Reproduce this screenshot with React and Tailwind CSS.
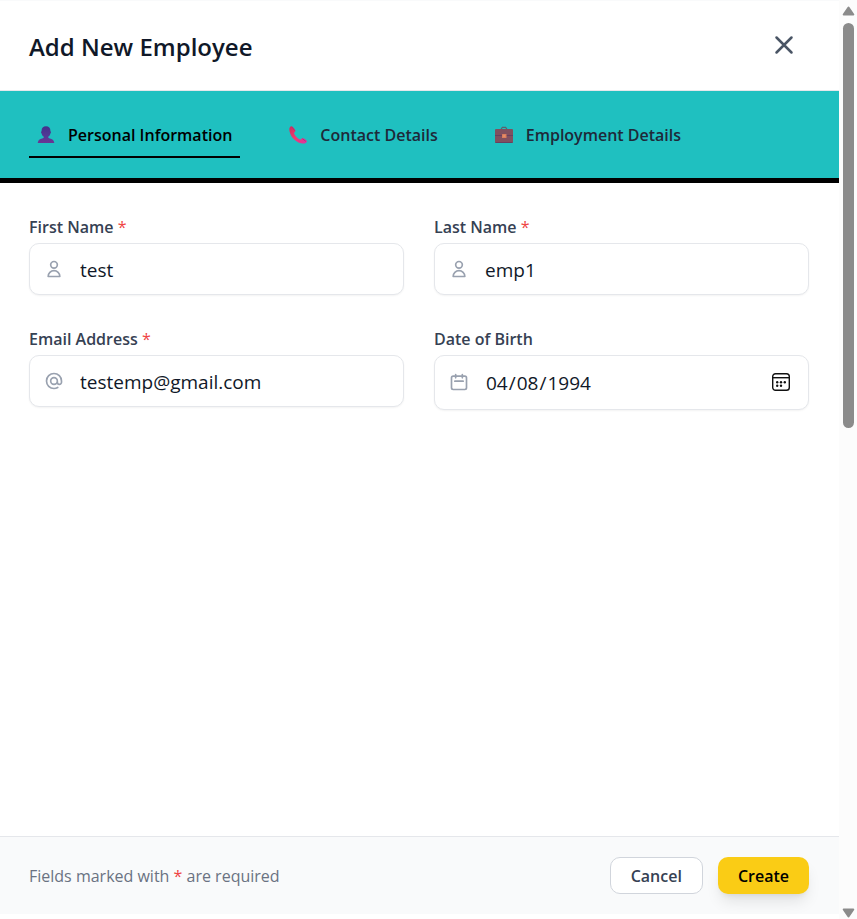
import React, { useState } from 'react';
import { HiOutlineAtSymbol, HiOutlineCalendar, HiOutlineUser, HiOutlineX } from 'react-icons/hi';

const PersonIcon = () => (
  <svg viewBox="0 0 18 18" className="w-[18px] h-[18px]" aria-hidden="true">
    <defs>
      <linearGradient id="person" x1="0" y1="0" x2="0" y2="1">
        <stop offset="0" stopColor="#43308c" />
        <stop offset="0.6" stopColor="#533a96" />
        <stop offset="1" stopColor="#6b3593" />
      </linearGradient>
    </defs>
    <path
      fill="url(#person)"
      d="M9 0.2C6.1 0.2 4.6 1.8 4.6 4.5v0.7c-0.7 0.1-0.8 1.9 0 2.2 0.3 1.6 1.1 2.5 2.1 3.2v1.2c-0.6 0.9-4 1-5.1 2.6-0.5 0.7-0.8 1.6-0.9 2.6h16.6c-0.1-1-0.4-1.900-0.900-2.600-1.100-1.600-4.500-1.700-5.100-2.600v-1.200c1-0.700 1.800-1.600 2.100-3.200 0.800-0.300 0.700-2.100 0-2.200V4.500C13.400 1.800 11.900 0.200 9 0.200z"
    />
  </svg>
);

const PhoneIcon = () => (
  <svg viewBox="0 0 18 18" className="w-[18px] h-[18px]" aria-hidden="true">
    <defs>
      <linearGradient id="phone" x1="0" y1="0" x2="1" y2="1">
        <stop offset="0" stopColor="#c9305e" />
        <stop offset="0.5" stopColor="#f2386f" />
        <stop offset="1" stopColor="#d936a6" />
      </linearGradient>
    </defs>
    <path
      fill="url(#phone)"
      d="M1.6 0.6C0.3 1.4 0.1 3.3 0.5 5.2c1.2 5.6 5.6 10.6 11.6 12.1 1.9 0.5 3.8 0.5 4.9-0.6 0.4-0.4 0.9-1 1-1.5 0.1-0.6-3.4-3.1-4.2-3.2-0.8-0.1-1.6 1.6-2.5 1.5C9.3 13.2 5.3 9 5.1 7.2c-0.1-0.9 1.3-1.5 1.4-2.3C6.6 4.1 3.7 0.3 2.9 0.2 2.4 0.2 2 0.4 1.6 0.6z"
    />
    <path stroke="#a83278" strokeWidth="0.8" d="M3.2 1.1l2.6 3.7M13.4 12.8l3.5 2.5" />
  </svg>
);

const BriefcaseIcon = () => (
  <svg viewBox="0 0 18 18" className="w-[18px] h-[18px]" aria-hidden="true">
    <path fill="none" stroke="#5b626d" strokeWidth="1.2" d="M6.4 3.3V2.600l1-1.200h3.200l1 1.200v0.700" />
    <rect x="0" y="3" width="18" height="14" rx="1" fill="#80505f" />
    <path stroke="#68405f" strokeWidth="1" d="M0 9.5h18M0.5 16.5h17" />
    <rect x="7" y="8" width="4.500" height="4" rx="0.600" fill="#db7e5d" />
    <rect x="8.300" y="9.300" width="1.900" height="1.400" fill="#e69870" />
  </svg>
);

const DateIcon = () => (
  <svg viewBox="0 0 20 20" className="w-5 h-5" fill="none" aria-hidden="true">
    <rect x="1.7" y="1.7" width="16.6" height="16.6" rx="2.8" stroke="#111" strokeWidth="1.4" />
    <path stroke="#111" strokeWidth="1.4" d="M1.7 5.7h16.6" />
    <g fill="#111">
      <circle cx="6.2" cy="10.2" r="1.2" />
      <circle cx="10" cy="10.2" r="1.2" />
      <circle cx="13.8" cy="10.2" r="1.2" />
      <circle cx="6.2" cy="13.8" r="1.2" />
      <circle cx="10" cy="13.8" r="1.2" />
    </g>
  </svg>
);

const tabs = [
  { id: 'personal', label: 'Personal Information', icon: PersonIcon },
  { id: 'contact', label: 'Contact Details', icon: PhoneIcon },
  { id: 'employment', label: 'Employment Details', icon: BriefcaseIcon },
];

const fields = [
  { id: 'firstName', label: 'First Name', type: 'text', required: true, icon: HiOutlineUser },
  { id: 'lastName', label: 'Last Name', type: 'text', required: true, icon: HiOutlineUser },
  { id: 'email', label: 'Email Address', type: 'email', required: true, icon: HiOutlineAtSymbol },
  { id: 'dob', label: 'Date of Birth', type: 'date', required: false, icon: HiOutlineCalendar },
];

const Field = ({ field, value, onChange }) => {
  const Icon = field.icon;
  const isDate = field.type === 'date';

  return (
    <div>
      <label htmlFor={field.id} className="block mb-1 text-base font-semibold text-gray-700">
        {field.label} {field.required && <span className="font-normal text-[#ef4444]">*</span>}
      </label>
      <div className="relative">
        <Icon
          className={`absolute left-[15px] w-5 h-5 text-gray-400 pointer-events-none ${
            isDate ? 'top-[17px]' : 'top-4'
          }`}
        />
        <input
          id={field.id}
          type={field.type}
          value={value}
          onChange={(e) => onChange(field.id, e.target.value)}
          className={`block w-full pt-0.5 pl-[50px] pr-4 text-[19px] text-gray-900 bg-white border border-gray-200 rounded-[10px] shadow-xs focus:outline-none focus:border-teal-500 ${
            isDate ? 'h-[55px] [&::-webkit-calendar-picker-indicator]:opacity-0' : 'h-[52px]'
          }`}
        />
        {isDate && (
          <span className="absolute right-[18px] top-[17px] pointer-events-none">
            <DateIcon />
          </span>
        )}
      </div>
    </div>
  );
};

const Scrollbar = () => (
  <div className="flex flex-col items-center w-[18px] shrink-0 pt-1.5 bg-[#fcfcfc]" aria-hidden="true">
    <svg viewBox="0 0 13 10" className="w-[13px] h-2.5">
      <path d="M6.5 1.5l4.8 7H1.7z" fill="#8b8b8b" stroke="#8b8b8b" strokeWidth="2" strokeLinejoin="round" />
    </svg>
    <div className="w-[11px] h-[405px] mt-[7px] rounded-full bg-[#8b8b8b]" />
    <svg viewBox="0 0 13 10" className="w-[13px] h-2.5 mt-auto mb-px">
      <path d="M6.5 8.5l4.8-7H1.7z" fill="#8b8b8b" stroke="#8b8b8b" strokeWidth="2" strokeLinejoin="round" />
    </svg>
  </div>
);

const AddEmployeeForm = () => {
  const [activeTab, setActiveTab] = useState('personal');
  const [formData, setFormData] = useState({
    firstName: 'test',
    lastName: 'emp1',
    email: 'testemp@gmail.com',
    dob: '1994-04-08',
  });

  const handleChange = (id, value) => {
    setFormData((prev) => ({ ...prev, [id]: value }));
  };

  return (
    <div className="flex min-h-screen bg-white font-['Open_Sans','Noto_Sans',sans-serif]">
      <div className="flex flex-col flex-1 min-w-0 pb-[5px]">
        {/* Header */}
        <header className="flex items-center justify-between h-[91px] pl-[29px] pr-10 border-t border-t-gray-50 border-b border-b-gray-200">
          <h2 className="pt-0.5 text-[24px] leading-8 font-semibold text-gray-900">Add New Employee</h2>
          <button type="button" aria-label="Close" className="pb-0.5 text-gray-600 hover:text-gray-800">
            <HiOutlineX className="w-[30px] h-[30px]" />
          </button>
        </header>

        {/* Tabs */}
        <nav className="flex items-start gap-[41px] h-[92px] pt-5 pl-[29px] bg-[#1fc0c0] border-b-[5px] border-black">
          {tabs.map(({ id, label, icon: Icon }) => (
            <button
              key={id}
              type="button"
              onClick={() => setActiveTab(id)}
              className={`flex items-center gap-[13px] h-[47px] pt-0.5 px-2 border-b-2 text-base font-semibold whitespace-nowrap ${
                activeTab === id ? 'border-black text-black' : 'border-transparent text-gray-800'
              }`}
            >
              <Icon />
              {label}
            </button>
          ))}
        </nav>

        {/* Form fields */}
        <form id="employee" onSubmit={(e) => e.preventDefault()} className="flex-1 pt-8 pl-[29px] pr-[30px]">
          <div className="grid grid-cols-2 items-start gap-x-[30px] gap-y-8">
            {fields.map((field) => (
              <Field key={field.id} field={field} value={formData[field.id]} onChange={handleChange} />
            ))}
          </div>
        </form>

        {/* Footer */}
        <footer className="flex items-center justify-between h-[78px] pl-[29px] pr-[30px] bg-gray-50 border-t border-gray-200">
          <p className="text-base text-gray-500">
            Fields marked with <span className="text-[#ef4444]">*</span> are required
          </p>
          <div className="flex gap-[15px]">
            <button
              type="button"
              className="h-[37px] px-5 text-base font-semibold text-gray-700 bg-white border border-gray-300 rounded-[10px] hover:bg-gray-50"
            >
              Cancel
            </button>
            <button
              type="submit"
              form="employee"
              className="h-[37px] px-5 text-base font-semibold text-black bg-[#facc15] rounded-[10px] shadow-lg hover:bg-yellow-500"
            >
              Create
            </button>
          </div>
        </footer>
      </div>
      <Scrollbar />
    </div>
  );
};

export default AddEmployeeForm;
